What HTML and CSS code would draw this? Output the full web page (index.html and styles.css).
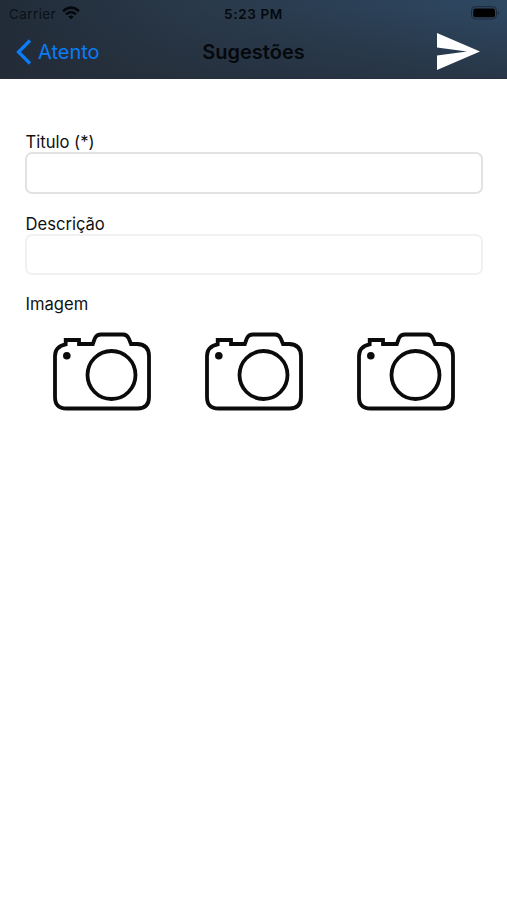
FILE: index.html
```html
<!DOCTYPE html>
<html lang="pt">
<head>
<meta charset="utf-8">
<title>Sugestões</title>
<link rel="stylesheet" href="styles.css">
</head>
<body>
<svg class="defs" width="0" height="0">
  <symbol id="camera" viewBox="0 0 104 84">
    <g fill="none" stroke="#0b0b0b" stroke-width="3.8">
      <path d="M15.700 14.300V10H29V14H42.800L44.800 8.500Q46.500 4.500 51 4.500H73Q77 4.500 78.800 8.500L81 14H87Q99 14.500 99 26V67Q99 78.500 87.500 78.500H16.500Q5 78.500 5 67V26Q5 16.500 15.700 14.300Z"/>
      <circle cx="61.5" cy="45" r="24"/>
    </g>
    <circle cx="16.800" cy="25.700" r="3.800" fill="#0b0b0b"/>
  </symbol>
</svg>
<header class="header">
  <div class="status">
    <div class="carrier"><span>Carrier</span>
      <svg width="18" height="14" viewBox="0 0 18 14"><g fill="none" stroke="#05080c" stroke-width="2.600"><path d="M1 5.200Q9-2 17 5.200"/><path d="M4 8.300Q9 4 14 8.300"/></g><path d="M6.300 10.500Q9 8.400 11.700 10.500L9 13.300Z" fill="#05080c"/></svg>
    </div>
    <div class="time">5:23 PM</div>
    <svg class="battery" width="30" height="14" viewBox="0 0 30 14"><rect x=".5" y=".7" width="25" height="12.300" rx="3.800" fill="none" stroke="#1c2837"/><rect x="2.300" y="2.500" width="21.700" height="8.800" rx="2" fill="#000"/><path d="M27 5Q29 7 27 9Z" fill="#1c2837"/></svg>
  </div>
  <nav class="nav">
    <div class="back">
      <svg width="16" height="28" viewBox="0 0 16 28"><path d="M14 2.500L2.500 14L14 25.500" fill="none" stroke="#0a7cf5" stroke-width="3.300"/></svg>
      <span>Atento</span>
    </div>
    <h1>Sugestões</h1>
    <svg class="send" width="43" height="37" viewBox="0 0 43 37"><path d="M0 0L43 18.500L0 37V22.600L30 18.500L0 14.400Z" fill="#fff"/></svg>
  </nav>
</header>
<main class="form">
  <label class="field"><span>Titulo (*)</span><input class="box" type="text"></label>
  <label class="field description"><span>Descrição</span><input class="box light" type="text"></label>
  <div class="caption"><span>Imagem</span></div>
  <div class="images">
    <svg width="104" height="84"><use href="#camera"/></svg>
    <svg width="104" height="84"><use href="#camera"/></svg>
    <svg width="104" height="84"><use href="#camera"/></svg>
  </div>
</main>
</body>
</html>
```
FILE: styles.css
```css
* { box-sizing: border-box; }
body { margin: 0; height: 900px; background: #fff; color: #111; font-family: Inter, sans-serif; }
svg { display: block; flex: none; }
.defs { position: absolute; }
.header {
  height: 79px;
  background: linear-gradient(to bottom, rgba(36,43,54,0) 10%, rgba(36,43,54,.6) 100%), linear-gradient(to right, #212c38 0%, #293848 35%, #2b4056 70%, #2e4862 100%);
  border-bottom: 1px solid #252f3c;
  color: #05080c;
}
.status { display: grid; grid-template-columns: 1fr auto 1fr; height: 27px; align-items: center; padding: 0 6px 0 9px; font-size: 13.5px; }
.carrier { display: flex; align-items: center; gap: 6px; letter-spacing: .4px; color: #0a1017; }
.carrier svg { margin-top: -2px; }
.time { margin-left: -3px; font-weight: 600; letter-spacing: .65px; }
.battery { justify-self: end; margin-top: -1px; }
.nav { display: grid; grid-template-columns: 1fr auto 1fr; align-items: center; height: 50px; padding: 0 27px 0 16px; }
.back { display: flex; align-items: center; gap: 6px; color: #0a7cf5; font-size: 20px; }
h1 { margin: 0 0 0 11px; font-size: 20px; line-height: 26px; font-weight: 600; }
.send { justify-self: end; margin-top: -1px; }
.form { padding: 53px 25px 0; font-size: 16.6px; }
.field { display: block; height: 82px; }
.field span, .caption span { display: block; height: 20px; line-height: 20px; padding-left: .5px; }
.description { height: 80px; }
.box { display: block; width: 458px; height: 42px; padding: 0 10px; border: 2px solid #e2e2e2; border-radius: 7px; font: inherit; background: #fff; outline: 0; }
.light { height: 41px; border-color: #f1f1f1; }
.caption { height: 36px; }
.images { display: grid; grid-template-columns: repeat(3, 1fr); justify-items: center; padding-left: 1px; }
```
